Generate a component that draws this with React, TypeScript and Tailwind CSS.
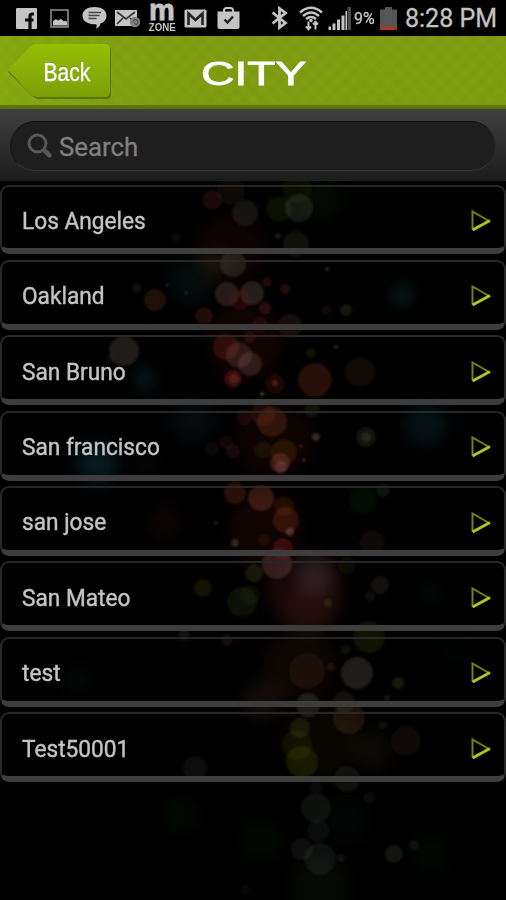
import React from 'react';

const cities = [
  'Los Angeles',
  'Oakland',
  'San Bruno',
  'San francisco',
  'san jose',
  'San Mateo',
  'test',
  'Test50001',
];

// [x, y, radius, color, opacity]
type Light = [number, number, number, string, number];

const lights: Light[] = [
  [212, 200, 10, '#a03a30', 0.25],
  [231, 191, 14, '#7c4030', 0.2],
  [245, 213, 13, '#8a8070', 0.24],
  [279, 209, 13, '#5c7020', 0.22],
  [299, 208, 14, '#7f9a70', 0.26],
  [297, 188, 15, '#3c6010', 0.22],
  [296, 244, 13, '#80704c', 0.22],
  [278, 236, 3, '#b0a090', 0.25],
  [176, 237, 5, '#707050', 0.15],
  [233, 264, 13, '#a09888', 0.28],
  [227, 294, 12, '#b08478', 0.34],
  [252, 293, 12, '#b08c84', 0.34],
  [240, 300, 10, '#b02020', 0.25],
  [267, 282, 5, '#b03828', 0.3],
  [285, 289, 5, '#c04030', 0.32],
  [265, 308, 6, '#b04040', 0.34],
  [326, 310, 5, '#a02c38', 0.22],
  [346, 310, 6, '#787850', 0.3],
  [155, 300, 11, '#9c5020', 0.34],
  [137, 288, 5, '#807040', 0.2],
  [204, 316, 9, '#a04028', 0.3],
  [290, 326, 12, '#b06050', 0.22],
  [260, 325, 8, '#803020', 0.25],
  [124, 351, 15, '#a09488', 0.32],
  [110, 359, 4, '#a09488', 0.1],
  [226, 347, 13, '#b03c28', 0.34],
  [239, 355, 13, '#a06858', 0.35],
  [250, 364, 12, '#b0847c', 0.32],
  [233, 379, 9, '#d03038', 0.4],
  [234, 379, 5, '#e06060', 0.3],
  [250, 337, 6, '#b02c20', 0.3],
  [311, 353, 5, '#507010', 0.3],
  [315, 380, 17, '#a03818', 0.42],
  [360, 372, 15, '#704024', 0.25],
  [275, 384, 10, '#902018', 0.3],
  [275, 383, 3, '#e08060', 0.35],
  [262, 394, 2, '#f0c0b0', 0.5],
  [336, 347, 2, '#c0a0a0', 0.4],
  [327, 269, 2, '#c0a0a0', 0.4],
  [167, 285, 1.5, '#a0a090', 0.4],
  [186, 293, 1.5, '#a0a090', 0.4],
  [272, 422, 15, '#b0481c', 0.36],
  [263, 414, 12, '#a03c20', 0.28],
  [312, 409, 8, '#708020', 0.24],
  [244, 417, 8, '#903020', 0.3],
  [366, 437, 10, '#707850', 0.26],
  [366, 437, 5, '#a0a080', 0.22],
  [316, 437, 4, '#c0b090', 0.4],
  [301, 446, 2, '#d02020', 0.5],
  [304, 460, 1.5, '#d0a0a0', 0.5],
  [263, 450, 9, '#605810', 0.25],
  [284, 452, 13, '#904818', 0.34],
  [280, 463, 10, '#d06060', 0.4],
  [281, 467, 6, '#f0a0a0', 0.25],
  [226, 442, 7, '#904030', 0.18],
  [233, 451, 7, '#a04c50', 0.22],
  [212, 449, 7, '#704838', 0.18],
  [235, 493, 11, '#b04420', 0.38],
  [261, 498, 13, '#c05c38', 0.42],
  [284, 506, 10, '#804018', 0.3],
  [286, 520, 13, '#b04420', 0.38],
  [290, 532, 4, '#f0b0a0', 0.4],
  [283, 548, 10, '#c02820', 0.38],
  [264, 540, 6, '#802018', 0.25],
  [235, 543, 4, '#b0a890', 0.34],
  [216, 523, 2, '#a09890', 0.3],
  [383, 490, 7, '#506840', 0.28],
  [363, 500, 14, '#145018', 0.28],
  [372, 543, 13, '#684030', 0.2],
  [277, 564, 15, '#b06868', 0.4],
  [254, 573, 9, '#68801c', 0.32],
  [203, 588, 9, '#707018', 0.28],
  [242, 602, 15, '#607020', 0.24],
  [250, 595, 10, '#486010', 0.18],
  [380, 585, 9, '#807870', 0.25],
  [370, 596, 5, '#706840', 0.2],
  [328, 603, 4, '#90802c', 0.3],
  [347, 565, 9, '#585020', 0.22],
  [184, 635, 6, '#887050', 0.24],
  [227, 640, 6, '#905020', 0.26],
  [369, 637, 16, '#648018', 0.25],
  [346, 650, 5, '#706020', 0.25],
  [357, 673, 16, '#a09488', 0.32],
  [331, 667, 4, '#a03828', 0.3],
  [307, 671, 18, '#884028', 0.22],
  [398, 683, 6, '#7c8830', 0.3],
  [308, 705, 12, '#a0a098', 0.26],
  [344, 702, 11, '#907c70', 0.22],
  [349, 718, 16, '#90602c', 0.3],
  [300, 728, 10, '#808830', 0.24],
  [302, 762, 16, '#708014', 0.28],
  [297, 745, 15, '#606010', 0.22],
  [383, 725, 4, '#707040', 0.25],
  [406, 741, 15, '#784838', 0.19],
  [387, 698, 3, '#a09890', 0.25],
  [347, 779, 13, '#788060', 0.2],
  [195, 768, 12, '#608070', 0.18],
  [316, 787, 6, '#687468', 0.16],
  [316, 808, 15, '#688070', 0.2],
  [318, 831, 11, '#607868', 0.17],
  [302, 849, 11, '#748078', 0.18],
  [320, 859, 16, '#748078', 0.2],
  [341, 858, 4, '#788070', 0.2],
  [394, 854, 9, '#8c9484', 0.23],
  [414, 845, 5, '#809078', 0.18],
  [369, 798, 6, '#607068', 0.15],
  [245, 890, 5, '#706850', 0.12],
];

// large soft spots behind the lights
const glows: Light[] = [
  [230, 250, 42, '#802418', 0.2],
  [192, 280, 28, '#1c5050', 0.3],
  [215, 262, 15, '#606010', 0.35],
  [322, 200, 24, '#244810', 0.28],
  [402, 295, 13, '#38888c', 0.38],
  [245, 340, 46, '#802018', 0.24],
  [145, 379, 13, '#2c7080', 0.42],
  [193, 420, 26, '#305060', 0.26],
  [426, 424, 26, '#14586a', 0.38],
  [97, 464, 25, '#1c7c90', 0.4],
  [145, 462, 18, '#303050', 0.24],
  [165, 522, 20, '#602c28', 0.26],
  [275, 440, 45, '#702418', 0.24],
  [265, 530, 44, '#802018', 0.25],
  [305, 590, 46, '#a03840', 0.28],
  [315, 576, 22, '#a09cb0', 0.3],
  [310, 610, 32, '#80402c', 0.22],
  [431, 594, 12, '#285048', 0.28],
  [300, 665, 42, '#583418', 0.28],
  [78, 680, 18, '#204038', 0.24],
  [263, 700, 24, '#986060', 0.24],
  [455, 650, 22, '#183030', 0.16],
  [320, 740, 46, '#483414', 0.24],
  [372, 750, 24, '#504020', 0.3],
  [181, 815, 20, '#184814', 0.24],
  [263, 840, 26, '#184c20', 0.2],
  [345, 820, 30, '#1c3424', 0.2],
  [430, 855, 24, '#1c4820', 0.18],
  [320, 888, 36, '#34481c', 0.24],
];

const Background: React.FC = () => (
  <svg className="absolute inset-0" width="506" height="900" viewBox="0 0 506 900">
    <defs>
      <filter id="glow" x="-60%" y="-60%" width="220%" height="220%">
        <feGaussianBlur stdDeviation="8" />
      </filter>
      <filter id="soft" x="-20%" y="-20%" width="140%" height="140%">
        <feGaussianBlur stdDeviation="0.9" />
      </filter>
    </defs>
    {glows.map(([x, y, r, color, opacity], i) => (
      <circle key={i} cx={x} cy={y} r={r * 0.85} fill={color} opacity={opacity * 0.5} filter="url(#glow)" />
    ))}
    <g filter="url(#soft)">
      {lights.map(([x, y, r, color, opacity], i) => (
        <circle key={i} cx={x} cy={y} r={r} fill={color} opacity={opacity * 0.6} />
      ))}
    </g>
  </svg>
);

const StatusBar: React.FC = () => (
  <div className="relative flex h-9 items-center bg-black pl-4 text-[#c4c4c4]">
    {/* Facebook */}
    <svg width="21" height="21" viewBox="0 0 21 21" className="shrink-0">
      <rect width="21" height="21" rx="1" fill="currentColor" />
      <path fill="none" stroke="#0c0c0c" strokeWidth="3.200" d="M18 6h-1.700q-2.300 0-2.300 2.500V21M9 12h8.500" />
    </svg>
    {/* Gallery */}
    <svg width="20" height="19" viewBox="0 0 20 19" className="ml-[13px] shrink-0">
      <rect x="1" y="1" width="17" height="17" fill="none" stroke="#8c8c8c" strokeWidth="1.600" />
      <path fill="currentColor" d="M3 12l3-2 2 1.500 3-1.500 3 2.500 1.500-1L17 13v3.500H3z" />
    </svg>
    {/* Message */}
    <svg width="25" height="22" viewBox="0 0 25 22" className="ml-3 shrink-0">
      <path fill="currentColor" d="M12.500 0C19.500 0 24.500 3 24.500 8.500c0 4-2 6.500-6 8-.5 2.500-2 4.200-4.700 5.200.9-1.600 1-3 .6-4.500C6.500 17.500.5 14.500.5 8.700.5 3 5.500 0 12.500 0z" />
      <path stroke="#444" strokeWidth="1.500" d="M6.500 5.500h12.500M6.500 8.500h11M6.500 11.500h8" />
    </svg>
    {/* Mail */}
    <svg width="26" height="20" viewBox="0 0 26 20" className="ml-2 shrink-0">
      <rect width="22" height="16" y="2" fill="currentColor" />
      <path fill="none" stroke="#333" strokeWidth="1.600" d="M2 4l9 7 9-7M2 16l6-6M19 14l-4-4" />
      <circle cx="20" cy="14" r="5.200" fill="#808080" />
      <path fill="none" stroke="#444" strokeWidth="1" d="M18 13.500a2.500 2.500 0 1 1 2.500 3M22 17.500l-3-3" />
    </svg>
    {/* Carrier zone */}
    <div className="ml-[7px] flex h-9 w-7 shrink-0 flex-col items-center font-['Liberation_Sans'] font-bold">
      <span className="h-[21px] text-[29px] leading-[21px] [-webkit-text-stroke:0.8px]">m</span>
      <span className="h-[11px] scale-x-[.88] text-[11px] leading-[12px]">ZONE</span>
    </div>
    {/* Gmail */}
    <svg width="23" height="19" viewBox="0 0 23 19" className="ml-2 shrink-0">
      <rect x=".5" y=".5" width="22" height="18" rx="1.500" fill="currentColor" />
      <path fill="none" stroke="#222" strokeWidth="2.600" d="M4.500 16V4.500l7 6.500 7-6.500V16" />
    </svg>
    {/* Play store */}
    <svg width="23" height="23" viewBox="0 0 23 23" className="ml-[10px] mb-0.5 shrink-0">
      <path fill="none" stroke="currentColor" strokeWidth="2" d="M7 6V4.500Q7 2 9.500 2h4Q16 2 16 4.500V6" />
      <path fill="currentColor" d="M.5 5.500h22v15.500q0 2-2 2h-18q-2 0-2-2z" />
      <path fill="none" stroke="#222" strokeWidth="2.400" d="M7.500 13.500l3 3 5.500-6" />
    </svg>
    {/* Bluetooth */}
    <svg width="17" height="24" viewBox="0 0 17 24" className="ml-[31px] shrink-0">
      <path fill="none" stroke="currentColor" strokeWidth="2.800" d="M1.500 6.500l13 10.500-6 4.500v-19l6 4.500-13 10.500" />
    </svg>
    {/* Wifi */}
    <svg width="24" height="25" viewBox="0 0 24 25" className="ml-[11px] shrink-0">
      <path fill="none" stroke="currentColor" strokeWidth="2.400" d="M1 6.500Q12-3 23 6.500M4 10Q12 3 20 10M7 13q5-4 10 0" />
      <circle cx="12" cy="14.500" r="1.800" fill="currentColor" />
      <path fill="none" stroke="currentColor" strokeWidth="2" d="M9.500 15.500v7.500M7 20.500l2.500 2.800 2.500-2.800M16.500 23.500V16M14 18.500l2.500-2.800 2.500 2.800" />
    </svg>
    {/* Signal */}
    <svg width="23" height="23" viewBox="0 0 23 23" className="ml-[5px] shrink-0">
      <path fill="currentColor" d="M.5 19.500H3V23H.5zM4.500 16.500h3V23h-3zM9 12.500h3V23H9zM13.500 8.500h3V23h-3z" />
      <path fill="currentColor" d="M17.500 4H19v19h-1.500z" />
      <path fill="#4c4c4c" d="M19.500 0H23v23h-3.500z" />
    </svg>
    <span className="ml-[3px] w-[22px] shrink-0 origin-left scale-x-[.94] font-[Roboto] text-[17px] leading-none [-webkit-text-stroke:0.3px]">9%</span>
    {/* Battery */}
    <svg width="17" height="23" viewBox="0 0 17 23" className="ml-1 shrink-0">
      <path fill="#555" d="M5 0h7v2.500h5V23H0V2.500h5z" />
      <path fill="#b83220" d="M0 20h17v3H0z" />
    </svg>
    <span className="ml-2 shrink-0 whitespace-nowrap font-[Roboto] text-[25px] leading-none [-webkit-text-stroke:0.3px]">8:28 PM</span>
  </div>
);

const Header: React.FC = () => (
  <header className="relative flex h-[73px] items-start border-b-4 border-[#5b740b] bg-[#7e9b0f] bg-[repeating-linear-gradient(45deg,#ffffff03_0_6px,#00000002_6px_12px),repeating-linear-gradient(-45deg,#ffffff02_0_6px,#00000002_6px_12px),linear-gradient(90deg,#86a70d_0,#7e9b0f_35%)]">
    <button className="relative ml-[7px] mt-2 h-14 w-[105px] shrink-0 text-white">
      <svg className="absolute inset-0" width="105" height="57" viewBox="0 0 105 57">
        <defs>
          <linearGradient id="back" x1="0" y1="0" x2="0" y2="1">
            <stop offset="0" stopColor="#95be05" />
            <stop offset="1" stopColor="#7c9f08" />
          </linearGradient>
        </defs>
        <path fill="#4f6808" opacity=".8" d="M1 28L23 5q3-3 7-3h69q5 0 5 5v43q0 5-5 5H32q-4 0-7-3z" />
        <path fill="url(#back)" d="M1 26L23 3q3-3 7-3h68q5 0 5 5v43q0 5-5 5H30q-4 0-7-3z" />
      </svg>
      <span className="relative ml-[14px] inline-block scale-x-[.81] font-['Liberation_Sans'] text-[26px] leading-[50px] [-webkit-text-stroke:0.4px_white] [text-shadow:0_-1px_0_#5c7a08]">
        Back
      </span>
    </button>
    <h1 className="ml-[89px] mt-[17px] origin-left scale-x-[1.36] whitespace-nowrap font-['Liberation_Sans'] text-[34px] leading-[40px] text-white [-webkit-text-stroke:0.8px_white]">
      CITY
    </h1>
  </header>
);

const SearchBar: React.FC = () => (
  <div className="relative flex h-[72px] items-start bg-linear-to-b from-[#404040] to-[#1c1c1c] px-[10px] pt-3">
    <div className="flex h-[50px] w-full items-center rounded-full border border-t-[#101010] border-r-[#292929] border-b-[#333] border-l-[#181818] bg-[#1e1e1e] pl-4">
      <svg width="26" height="26" viewBox="0 0 26 26" fill="none" stroke="#585858">
        <circle cx="10.500" cy="10.500" r="8.500" strokeWidth="3" />
        <path strokeWidth="4.500" strokeLinecap="round" d="M17.500 17.500l5 5" />
      </svg>
      <span className="ml-[6px] mt-1 origin-left scale-x-[1.03] font-[Roboto] text-[25px] text-[#808080] [-webkit-text-stroke:0.3px]">
        Search
      </span>
    </div>
  </div>
);

const CityRow: React.FC<{ name: string }> = ({ name }) => (
  <li className="flex h-[69.900px] items-center justify-between rounded-[9px] border-2 border-b-[6px] border-t-[#272727] border-r-[#272727] border-b-[#3d3d3d] border-l-[#272727] pl-5 pr-[13px] pt-[7px]">
    <span className="mt-px origin-left scale-x-[.965] font-[Roboto] text-[23.5px] text-[#c4c4c4] [-webkit-text-stroke:0.4px]">
      {name}
    </span>
    <svg width="20" height="22" viewBox="0 0 20 22" fill="none">
      <path stroke="#71820f" strokeWidth="2" d="M18 11L1.500 1.500v18" />
      <path stroke="#a9c91b" strokeWidth="3" d="M1.500 20L19 10.500" />
    </svg>
  </li>
);

const App: React.FC = () => {
  return (
    <div className="relative h-[900px] w-[506px] overflow-hidden bg-black">
      <Background />
      <StatusBar />
      <Header />
      <SearchBar />
      <ul className="relative mt-[3.500px] flex flex-col gap-[5.500px]">
        {cities.map((city) => (
          <CityRow key={city} name={city} />
        ))}
      </ul>
    </div>
  );
};

export default App;
